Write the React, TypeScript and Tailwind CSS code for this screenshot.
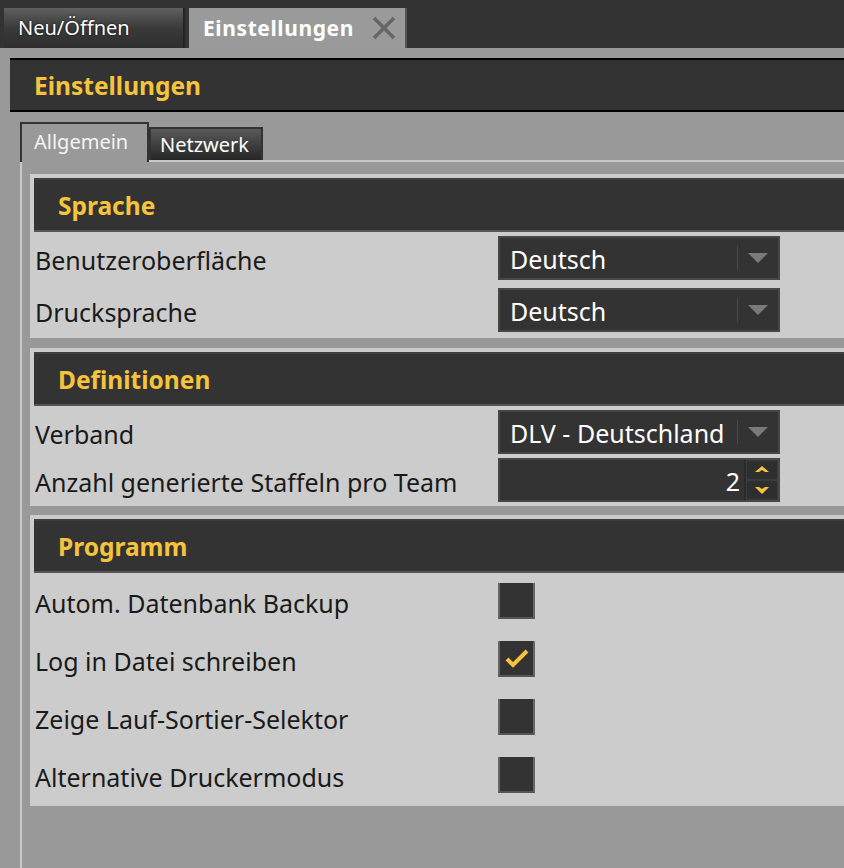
import { ReactNode } from "react";

const font = "font-['Noto_Sans','Open_Sans',sans-serif]";

function SectionHeader({ title }: { title: string }) {
  return (
    <div className="h-[54px] bg-[#333333] border-t-2 border-[#3f3f3f] border-b-2 border-b-[#555555] flex items-center pl-[24px]">
      <span className="text-[#f5c43c] font-bold text-[24.5px] leading-none pt-[3px]">{title}</span>
    </div>
  );
}

function Section({ title, children, className = "" }: { title: string; children: ReactNode; className?: string }) {
  return (
    <div className={`bg-[#cccccc] pt-[4px] pl-[4px] ${className}`}>
      <SectionHeader title={title} />
      {children}
    </div>
  );
}

function Row({ label, height, children }: { label: string; height: string; children: ReactNode }) {
  return (
    <div className={`flex items-center ${height}`}>
      <div className="w-[464px] pl-[1px] pt-[4px] text-[25px] text-[#1a1a1a] leading-none">{label}</div>
      {children}
    </div>
  );
}

function Dropdown({ value }: { value: string }) {
  return (
    <div className="w-[282px] h-[44px] bg-[#333333] border-2 border-[#474747] flex items-center">
      <span className="flex-1 pl-[10px] pt-[2px] text-[25px] text-white leading-none whitespace-nowrap">{value}</span>
      <div className="w-[1px] h-[24px] bg-[#484848]" />
      <div className="w-[40px] flex justify-center">
        <svg width="20" height="10" viewBox="0 0 20 10">
          <polygon points="0,0 20,0 10,10" fill="#7a7a7a" />
        </svg>
      </div>
    </div>
  );
}

function Spinner({ value }: { value: number }) {
  return (
    <div className="w-[282px] h-[44px] bg-[#333333] border-2 border-[#474747] flex">
      <div className="flex-1 flex items-center justify-end pr-[4px] pt-[2px] border-r-2 border-[#2a2a2a]">
        <span className="text-[25px] text-white leading-none">{value}</span>
      </div>
      <div className="w-[32px] flex flex-col gap-[2px] p-[1px] bg-[#3c3c3c]">
        <div className="flex-1 bg-[#2e2e2e] flex items-center justify-center">
          <svg width="14" height="8" viewBox="0 0 14 8">
            <polygon points="7,0 14,6 10,6 7,4 4,6 0,6" fill="#f5c43c" />
          </svg>
        </div>
        <div className="flex-1 bg-[#2e2e2e] flex items-center justify-center">
          <svg width="14" height="8" viewBox="0 0 14 8">
            <polygon points="0,1 4,1 7,3 10,1 14,1 7,8" fill="#f5c43c" />
          </svg>
        </div>
      </div>
    </div>
  );
}

function Checkbox({ checked }: { checked?: boolean }) {
  return (
    <div className="w-[37px] h-[36px] bg-[#333333] border-x-2 border-[#666666] border-b-2 border-b-[#555555] flex items-center justify-center">
      {checked && (
        <svg width="28" height="24" viewBox="0 0 28 24">
          <polyline points="4,13 10,19 24,5" fill="none" stroke="#f5c43c" strokeWidth="4" />
        </svg>
      )}
    </div>
  );
}

export default function App() {
  return (
    <div className={`w-[844px] h-[868px] bg-[#999999] overflow-hidden flex flex-col ${font}`}>
      {/* top document tabs */}
      <div className="h-[48px] bg-[#333333] flex items-end pl-[4px] gap-[4px] shrink-0">
        <div className="w-[181px] h-[40px] bg-gradient-to-b from-[#606060] via-[#3a3a3a] to-[#2e2e2e] border-r-2 border-[#222] flex items-center pl-[14px]">
          <span className="text-[20px] text-white leading-none [text-shadow:0_0_2px_#000]">Neu/Öffnen</span>
        </div>
        <div className="w-[218px] h-[40px] bg-[#9a9a9a] border-r-2 border-[#555555] flex items-center pl-[14px]">
          <span className="text-[21px] tracking-[0.6px] font-bold text-white leading-none">Einstellungen</span>
          <svg className="ml-auto mr-[8px]" width="26" height="24" viewBox="0 0 26 24">
            <path d="M3 2 L23 22 M23 2 L3 22" stroke="#666666" strokeWidth="3.5" />
          </svg>
        </div>
      </div>

      {/* page title */}
      <div className="ml-[10px] mt-[10px] h-[54px] bg-[#333333] border-y-2 border-black flex items-center pl-[24px] shrink-0">
        <span className="text-[#f5c43c] font-bold text-[24.5px] leading-none pt-[3px]">Einstellungen</span>
      </div>

      {/* inner tabs */}
      <div className="ml-[20px] mt-[10px] flex items-end shrink-0">
        <div className="relative z-10 w-[129px] h-[40px] -mb-[2px] bg-[#999999] border-2 border-b-0 border-[#333333] flex items-center pl-[12px] pb-[2px]">
          <span className="text-[20px] text-[#f4f4f4] leading-none">Allgemein</span>
        </div>
        <div className="w-[114px] h-[33px] bg-gradient-to-b from-[#5a5a5a] to-[#262626] border-2 border-b-0 border-[#333333] flex items-center pl-[9px]">
          <span className="text-[20px] text-white leading-none">Netzwerk</span>
        </div>
      </div>

      {/* tab content */}
      <div className="ml-[20px] flex-1 border-l-2 border-t-2 border-[#c8c8c8] pl-[8px] pt-[12px]">
        <Section title="Sprache" className="pb-[6px]">
          <div className="flex flex-col gap-[8px] pt-[4px]">
            <Row label="Benutzeroberfläche" height="h-[44px]">
              <Dropdown value="Deutsch" />
            </Row>
            <Row label="Drucksprache" height="h-[44px]">
              <Dropdown value="Deutsch" />
            </Row>
          </div>
        </Section>

        <Section title="Definitionen" className="mt-[10px] pb-[4px]">
          <div className="flex flex-col gap-[4px] pt-[4px]">
            <Row label="Verband" height="h-[44px]">
              <Dropdown value="DLV - Deutschland" />
            </Row>
            <Row label="Anzahl generierte Staffeln pro Team" height="h-[44px]">
              <Spinner value={2} />
            </Row>
          </div>
        </Section>

        <Section title="Programm" className="mt-[9px] pb-[13px]">
          <div className="flex flex-col gap-[22px] pt-[10px]">
            <Row label="Autom. Datenbank Backup" height="h-[36px]">
              <Checkbox />
            </Row>
            <Row label="Log in Datei schreiben" height="h-[36px]">
              <Checkbox checked />
            </Row>
            <Row label="Zeige Lauf-Sortier-Selektor" height="h-[36px]">
              <Checkbox />
            </Row>
            <Row label="Alternative Druckermodus" height="h-[36px]">
              <Checkbox />
            </Row>
          </div>
        </Section>
      </div>
    </div>
  );
}
